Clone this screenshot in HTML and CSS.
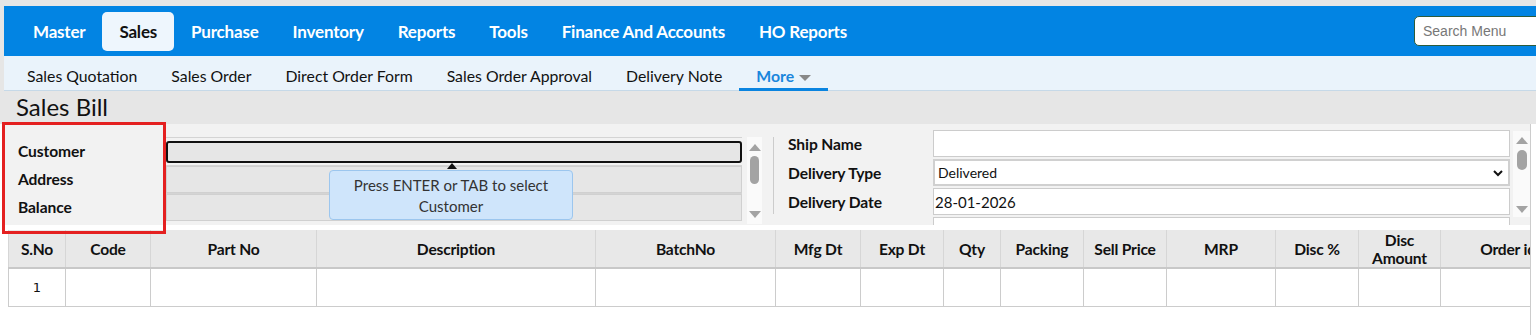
FILE: index.html
```html
<!DOCTYPE html>
<html>
<head>
    <title>Sales Bill</title>
    <meta charset="UTF-8">
    <link rel="stylesheet" href="styles.css">
</head>
<body>
    <div class="top">
        <div class="main-nav">
            <a href="#" class="nav-item">Master</a>
            <a href="#" class="nav-item active">Sales</a>
            <a href="#" class="nav-item">Purchase</a>
            <a href="#" class="nav-item">Inventory</a>
            <a href="#" class="nav-item">Reports</a>
            <a href="#" class="nav-item">Tools</a>
            <a href="#" class="nav-item">Finance And Accounts</a>
            <a href="#" class="nav-item">HO Reports</a>
            <input type="text" class="search-menu" placeholder="Search Menu">
        </div>
        <div class="sub-nav">
            <a href="#" class="sub-item">Sales Quotation</a>
            <a href="#" class="sub-item">Sales Order</a>
            <a href="#" class="sub-item">Direct Order Form</a>
            <a href="#" class="sub-item">Sales Order Approval</a>
            <a href="#" class="sub-item">Delivery Note</a>
            <a href="#" class="sub-item more">More <span class="caret"></span></a>
        </div>
        <div class="page-title">Sales Bill</div>
    </div>

    <div class="content">
        <div class="form-panel">
            <div class="left-form">
                <div class="label-col">
                    <div class="lbl">Customer</div>
                    <div class="lbl">Address</div>
                    <div class="lbl">Balance</div>
                </div>
                <div class="input-col">
                    <div class="in-row"><input type="text" class="fld focused"></div>
                    <div class="in-row"><input type="text" class="fld"></div>
                    <div class="in-row"><input type="text" class="fld"></div>
                </div>
                <div class="vscroll left-scroll">
                    <span class="arr up"></span>
                    <span class="thumb"></span>
                    <span class="arr down"></span>
                </div>
            </div>
            <div class="divider"></div>
            <div class="right-form">
                <div class="rows">
                    <div class="r-row"><span class="r-lbl">Ship Name</span><input type="text" class="r-fld"></div>
                    <div class="r-row"><span class="r-lbl">Delivery Type</span>
                        <div class="r-fld select-box">Delivered
                            <svg width="12" height="8" viewBox="0 0 12 8"><path d="M2 2 L6 6 L10 2" fill="none" stroke="#111" stroke-width="2"/></svg>
                        </div>
                    </div>
                    <div class="r-row"><span class="r-lbl">Delivery Date</span><input type="text" class="r-fld date" value="28-01-2026"></div>
                    <div class="r-row"><span class="r-lbl"></span><input type="text" class="r-fld"></div>
                </div>
                <div class="vscroll right-scroll">
                    <span class="arr up"></span>
                    <span class="thumb"></span>
                    <span class="arr down"></span>
                </div>
            </div>
            <span class="tip-arrow"></span>
            <div class="tooltip">Press ENTER or TAB to select Customer</div>
        </div>

        <div class="grid-wrap">
            <table class="grid">
                <colgroup>
                    <col class="w57"><col class="w85"><col class="w166"><col class="w279"><col class="w180">
                    <col class="w85"><col class="w83"><col class="w57"><col class="w83"><col class="w83">
                    <col class="w109"><col class="w83"><col class="w82"><col class="w135">
                </colgroup>
                <thead>
                    <tr>
                        <th>S.No</th><th>Code</th><th>Part No</th><th>Description</th><th>BatchNo</th>
                        <th>Mfg Dt</th><th>Exp Dt</th><th>Qty</th><th>Packing</th><th>Sell Price</th>
                        <th>MRP</th><th>Disc %</th><th>Disc Amount</th><th>Order id</th>
                    </tr>
                </thead>
                <tbody>
                    <tr>
                        <td class="sno">1</td><td></td><td></td><td></td><td></td><td></td><td></td>
                        <td></td><td></td><td></td><td></td><td></td><td></td><td></td>
                    </tr>
                </tbody>
            </table>
        </div>
    </div>

    <div class="highlight-box"></div>
</body>
</html>
```

FILE: styles.css
```css
body { margin: 0; background: #fff; font-family: Lato, "Open Sans", sans-serif; color: #111; position: relative; height: 336px; overflow: hidden; }
a { text-decoration: none; }

.top { background: #e6e6e6; padding: 6px 0 0 4px; }
.main-nav { background: #0284e3; height: 50px; display: flex; align-items: center; padding-left: 12px; }
.nav-item { color: #fff; font-weight: bold; font-size: 17px; padding: 0 17px; height: 39px; line-height: 39px; border-radius: 5px; letter-spacing: -0.2px; }
.nav-item.active { background: #eef6fd; color: #111; }
.search-menu { margin-left: auto; width: 140px; height: 30px; box-sizing: border-box; border: 1px solid #2d5c3c; border-radius: 5px; padding: 0 8px; font-family: "Liberation Sans", Arial, sans-serif; font-size: 14px; margin-right: -18px; }
.search-menu::placeholder { color: #777; }

.sub-nav { background: #eaf3fb; height: 34px; border-bottom: 1px solid #c6d9e8; display: flex; align-items: center; padding-left: 6px; }
.sub-item { color: #111; font-size: 15.8px; padding: 0 17px; height: 34px; line-height: 40px; box-sizing: border-box; }
.sub-item.more { color: #1a86dc; font-weight: bold; border-bottom: 3px solid #0a84e0; height: 35px; margin-bottom: -1px; }
.caret { display: inline-block; width: 0; height: 0; border-left: 6px solid transparent; border-right: 6px solid transparent; border-top: 6px solid #888; vertical-align: middle; margin-left: 1px; }

.page-title { font-size: 24px; height: 33px; line-height: 31px; padding-left: 12px; }

.content { margin-left: 4px; width: 1526px; border-right: 1px solid #ccc; height: 211px; }

.form-panel { background: #f2f2f2; height: 101px; display: flex; position: relative; }
.left-form { display: flex; width: 758px; padding-top: 13px; box-sizing: border-box; }
.label-col { width: 162px; padding-left: 14px; box-sizing: border-box; }
.lbl { height: 28px; line-height: 28px; font-weight: bold; font-size: 15.6px; letter-spacing: -0.1px; }
.input-col { width: 576px; height: 88px; }
.in-row { height: 28px; border-top: 1px solid #d4d4d4; box-sizing: border-box; display: flex; align-items: center; }
.fld { width: 100%; height: 27px; box-sizing: border-box; background: #e6e6e6; border: 1px solid #d0d0d0; margin: 0; }
.fld.focused { height: 22px; border: 2px solid #111; border-radius: 3px; }

.vscroll { width: 15px; background: #fafafa; display: flex; flex-direction: column; align-items: center; justify-content: space-between; box-sizing: border-box; }
.left-scroll { height: 87px; margin-left: 5px; padding: 7px 0 6px; }
.arr { width: 0; height: 0; border-left: 6px solid transparent; border-right: 6px solid transparent; }
.arr.up { border-bottom: 7px solid #a3a3a3; }
.arr.down { border-top: 7px solid #a3a3a3; }
.thumb { width: 9px; border-radius: 5px; background: #a3a3a3; }
.left-scroll .thumb { height: 28px; margin-top: -10px; margin-bottom: 12px; }

.divider { width: 1px; background: #ccc; height: 77px; margin: 13px 14px 0 11px; }

.right-form { display: flex; padding-top: 5px; overflow: hidden; }
.rows { width: 722px; }
.r-row { height: 29px; display: flex; align-items: center; }
.r-lbl { width: 145px; font-weight: bold; font-size: 15.6px; letter-spacing: -0.1px; }
.r-fld { width: 577px; height: 27px; box-sizing: border-box; border: 1px solid #ccc; background: #fff; margin: 0; font-family: Lato, sans-serif; font-size: 15px; padding: 0; color: #111; }
.select-box { display: flex; align-items: center; justify-content: space-between; border: 2px solid #d0d0d0; padding: 0 4px 0 3px; font-size: 14px; }
.select-box svg { margin-top: 1px; }
.date { padding-left: 1px; }
.right-scroll { height: 86px; margin-left: 3px; margin-top: 2px; width: 17px; padding: 6px 0 4px; }
.right-scroll .thumb { height: 20px; margin-top: -14px; margin-bottom: 16px; width: 10px; }

.tooltip { position: absolute; left: 325px; top: 46px; width: 244px; height: 50px; box-sizing: border-box; background: #cfe5fb; border: 1px solid #9cc6ee; border-radius: 4px; text-align: center; font-size: 15px; color: #333; padding: 4px 12px 0; line-height: 21px; }
.tip-arrow { position: absolute; left: 443px; top: 39px; width: 0; height: 0; border-left: 5px solid transparent; border-right: 5px solid transparent; border-bottom: 6px solid #111; }

.grid-wrap { margin: 5px 0 0 4px; overflow: hidden; }
.grid { border-collapse: collapse; table-layout: fixed; width: 1567px; }
.grid th { background: #e8e8e8; font-size: 15.6px; font-weight: bold; height: 37px; border: 1px solid #d6d6d6; border-top: none; border-bottom: 2px solid #c8c8c8; padding: 0 4px; line-height: 18px; letter-spacing: -0.2px; }
.grid th:last-child { white-space: nowrap; }
.grid td { height: 35px; border: 1px solid #ccc; background: #fff; }
.grid td.sno { text-align: center; font-family: "DejaVu Sans", sans-serif; font-size: 13px; }
.w57 { width: 57px; } .w85 { width: 85px; } .w166 { width: 166px; } .w279 { width: 279px; }
.w180 { width: 180px; } .w83 { width: 83px; } .w109 { width: 109px; } .w82 { width: 82px; } .w135 { width: 135px; }

.highlight-box { position: absolute; left: 2px; top: 122px; width: 158px; height: 106px; border: 3px solid #e42020; }
```
